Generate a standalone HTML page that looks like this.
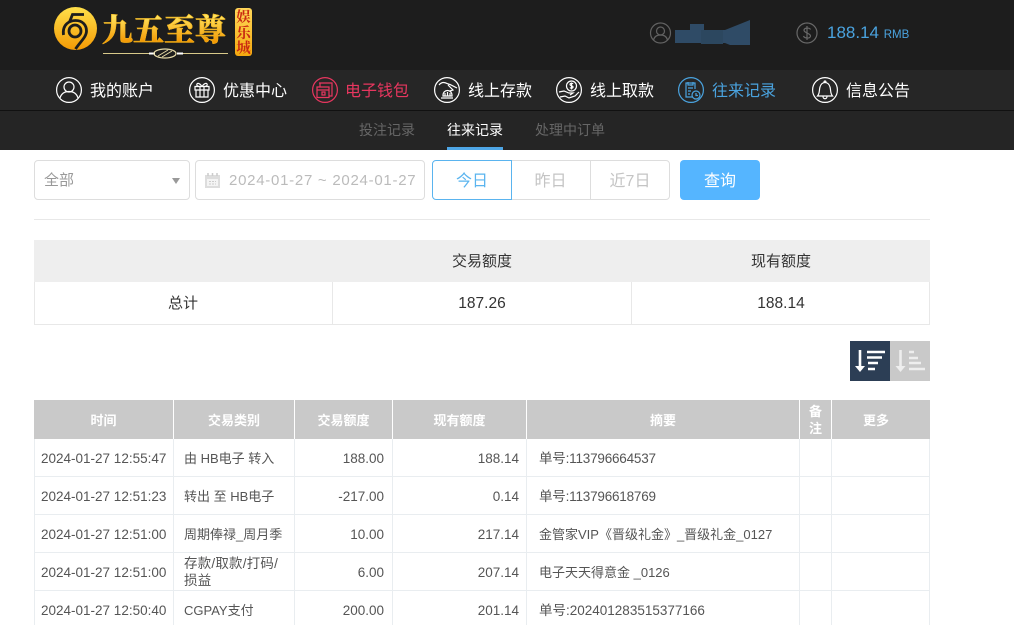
<!DOCTYPE html>
<html lang="zh">
<head>
<meta charset="utf-8">
<title>往来记录</title>
<style>
html,body{margin:0;padding:0;background:#fff;}
body{width:1014px;height:625px;overflow:hidden;position:relative;font-family:"Liberation Sans","Noto Sans CJK SC",sans-serif;font-size:14px;color:#555;}
.a{position:absolute;white-space:nowrap;}
svg{position:absolute;overflow:visible;}
.nav{font-size:16px;line-height:20px;top:82px;color:#fff;}
.ic{fill:none;stroke:#fff;stroke-width:1.2;}
.sub{font-size:14px;line-height:20px;top:120px;color:#666;}
.b{position:absolute;box-sizing:border-box;}
.th{position:absolute;top:400px;height:39px;background:#c9c9c9;color:#fff;font-weight:bold;font-size:13px;line-height:41px;text-align:center;border-right:1px solid #fff;box-sizing:border-box;}
.td{position:absolute;font-size:13.5px;line-height:18px;color:#555;white-space:nowrap;}
.c{font-size:13px;}
.n{letter-spacing:-.2px;}
.r{text-align:right;}
.hl{position:absolute;left:34px;width:896px;height:1px;background:#e9edf0;}
.vl{position:absolute;top:439px;height:186px;width:1px;background:#e9edf0;}
</style>
</head>
<body>
<div class="b" style="left:0;top:0;width:1014px;height:70px;background:#1d1d1d"></div>
<div class="b" style="left:0;top:70px;width:1014px;height:40px;background:#262626"></div>
<div class="b" style="left:0;top:110px;width:1014px;height:1px;background:#111"></div>
<div class="b" style="left:0;top:111px;width:1014px;height:39px;background:#252525"></div>

<!-- logo -->
<svg style="left:54px;top:7px" width="44" height="44" viewBox="0 0 44 44">
<defs><linearGradient id="g" x1="0" y1="0" x2="0" y2="1"><stop offset="0" stop-color="#ffe04a"/><stop offset="1" stop-color="#f49a05"/></linearGradient></defs>
<circle cx="21.5" cy="21.5" r="21.5" fill="url(#g)"/>
<path d="M30 7.500H18.500L15.500 15" fill="none" stroke="#1d1d1d" stroke-width="2.800"/>
<path d="M9.500 28C8 17 16 13.500 21.500 13.500C29 13.500 32.500 18.500 32.500 24C32.500 30 26 35 21.500 42" fill="none" stroke="#1d1d1d" stroke-width="2.800"/>
<circle cx="21" cy="24" r="6" fill="none" stroke="#1d1d1d" stroke-width="2.800"/>
</svg>
<div class="a" style="left:102px;top:9px;font:900 31px/38px 'Noto Serif CJK SC','Liberation Serif',serif;background:linear-gradient(#ffe25c 20%,#f39a06 85%);-webkit-background-clip:text;background-clip:text;color:transparent;-webkit-text-stroke:.5px #eeb01c">九五至尊</div>
<svg style="left:103px;top:46px" width="126" height="14" viewBox="0 0 126 14">
<path d="M0 7.500H46M80 7.500H125" stroke="#d8c98a" stroke-width="1"/>
<path d="M46 7.500h6M74 7.500h6" stroke="#fff" stroke-width="2"/>
<ellipse cx="62" cy="7.500" rx="11" ry="4.500" fill="none" stroke="#e8dca8" stroke-width="1.200"/>
<path d="M55 10L65 4M59 11L69 5" stroke="#e8dca8"/>
</svg>
<div class="b" style="left:235px;top:8px;width:17px;height:48px;border-radius:3px;background:linear-gradient(#ffd85a,#f4a90f)"></div>
<div class="a" style="left:236px;top:9px;width:15px;font:bold 14.500px/15.500px 'Noto Serif CJK SC',serif;color:#c92a12;white-space:normal;text-align:center">娱乐城</div>

<!-- user -->
<svg style="left:650px;top:22px" width="22" height="22" viewBox="0 0 22 22" fill="none" stroke="#626262" stroke-width="1.200">
<circle cx="10.500" cy="11" r="10"/><circle cx="10.500" cy="9" r="4"/><path d="M3.500 18c1-4 4-5 7-5s6 1 7 5"/>
</svg>
<svg style="left:675px;top:19px" width="76" height="27" viewBox="0 0 76 27">
<path d="M0 11H15V5H29V11H50L75 1V26H55L50 24H0Z" fill="#2f4b66"/>
<path d="M26 11H48V25H26Z" fill="#2c475f"/>
</svg>
<svg style="left:796px;top:22px" width="22" height="22" viewBox="0 0 22 22" fill="none" stroke="#686868" stroke-width="1.200">
<circle cx="11" cy="11" r="10"/><path d="M14.500 7.500c-1-2-6.500-2-6.500 .8S14.500 11 14.500 14s-6 2.500-7 0M11 4V18"/>
</svg>
<div class="a" style="left:827px;top:22px;font-size:17px;line-height:22px;color:#4aa3df">188.14 <span style="font-size:11.500px">RMB</span></div>

<!-- nav -->
<svg class="ic" style="left:56px;top:77px" width="26" height="26" viewBox="0 0 26 26"><circle cx="13" cy="13" r="12.400"/><circle cx="13" cy="10" r="5"/><path d="M4 21c1.500-5 5-6.500 9-6.500s7.500 1.500 9 6.500"/></svg>
<div class="a nav" style="left:90px">我的账户</div>
<svg class="ic" style="left:189px;top:77px" width="26" height="26" viewBox="0 0 26 26"><circle cx="13" cy="13" r="12.400"/><path d="M6 9.500H20V13H6ZM7 13V20H19V13M11 9.500V20M15 9.500V20M13 9.500C10 5 7 6 8 8.500 9 9.500 11 9.500 13 9.500C16 5 19 6 18 8.500 17 9.500 15 9.500 13 9.500"/></svg>
<div class="a nav" style="left:223px">优惠中心</div>
<svg class="ic" style="left:312px;top:77px;stroke:#e8365f" width="26" height="26" viewBox="0 0 26 26"><circle cx="13" cy="13" r="12.400"/><path d="M7 6H20V19H17M5 10H17V20.500H5ZM8 6V10M5 13H17M10 15h3v3h-3z"/></svg>
<div class="a nav" style="left:345px;color:#e8365f">电子钱包</div>
<svg class="ic" style="left:434px;top:77px" width="26" height="26" viewBox="0 0 26 26"><circle cx="13" cy="13" r="12.400"/><path d="M5 8C9 3 13 7 16 7.500L23 11M14 8l5 5-3 1M9 19v-1a4.500 4.500 0 0 1 9 0v1ZM11 16v3M13.500 15v4M16 16v3M7 21H19"/></svg>
<div class="a nav" style="left:468px">线上存款</div>
<svg class="ic" style="left:556px;top:77px" width="26" height="26" viewBox="0 0 26 26"><circle cx="13" cy="13" r="12.400"/><circle cx="15.500" cy="9" r="5"/><path d="M17 7c-.500-1-3-1-3 .500s3 1 3 2.500-2.500 1.500-3 .500M15.500 5.500v7M3 15l5-1 5 2h4l-3 2M4 20l5-1 4 2 6-2 4-4"/></svg>
<div class="a nav" style="left:590px">线上取款</div>
<svg class="ic" style="left:678px;top:77px;stroke:#4aa3df" width="26" height="26" viewBox="0 0 26 26"><circle cx="13" cy="13" r="12.400"/><path d="M15 20H8V6H17V12M10 5V8H15V5M10 11H15M10 14H13M10 17H12"/><circle cx="18" cy="18" r="4"/><path d="M18 16v2.500h2"/></svg>
<div class="a nav" style="left:712px;color:#4aa3df">往来记录</div>
<svg class="ic" style="left:812px;top:77px" width="26" height="26" viewBox="0 0 26 26"><circle cx="13" cy="13" r="12.400"/><path d="M5.500 19C8 16 7 13 8 10c.800-3 3-4.500 5-4.500S17.200 7 18 10c1 3 0 6 2.500 9ZM11 19.500c0 3 4 3 4 0M12 5.500c0-2 2-2 2 0"/></svg>
<div class="a nav" style="left:846px">信息公告</div>

<!-- sub nav -->
<div class="a sub" style="left:359px">投注记录</div>
<div class="a sub" style="left:447px;color:#fff">往来记录</div>
<div class="a sub" style="left:535px">处理中订单</div>
<div class="b" style="left:447px;top:147px;width:56px;height:3px;background:#4ea6e6"></div>

<!-- filters -->
<div class="b" style="left:34px;top:160px;width:156px;height:40px;border:1px solid #ddd;border-radius:4px"></div>
<div class="a" style="left:44px;top:171px;font-size:15px;line-height:20px;color:#999">全部</div>
<svg style="left:172px;top:178px" width="8" height="6"><path d="M0 0H8L4 6Z" fill="#999"/></svg>
<div class="b" style="left:195px;top:160px;width:230px;height:40px;border:1px solid #ddd;border-radius:4px"></div>
<svg style="left:204px;top:172px" width="17" height="17" viewBox="0 0 17 17"><path d="M1 3H16V16H1Z" fill="#ddd"/><path d="M3 7H14V14H3Z" fill="#f4f4f4"/><path d="M4 1V4M8.500 1V4M13 1V4" stroke="#ccc" stroke-width="1.500"/><path d="M5 9.500H12M5 12H12" stroke="#ccc" stroke-dasharray="2 1"/></svg>
<div class="a" style="left:229px;top:171px;font-size:15px;line-height:20px;color:#bbb;letter-spacing:.73px">2024-01-27 ~ 2024-01-27</div>
<div class="b" style="left:511px;top:160px;width:159px;height:40px;border:1px solid #ddd;border-radius:0 4px 4px 0"></div>
<div class="b" style="left:590px;top:160px;width:1px;height:40px;background:#ddd"></div>
<div class="b" style="left:432px;top:160px;width:80px;height:40px;border:1px solid #5ab4ef;border-radius:4px 0 0 4px;background:#fff"></div>
<div class="a" style="left:432px;top:172px;width:80px;text-align:center;font-size:16px;line-height:20px;color:#5ab4ef">今日</div>
<div class="a" style="left:511px;top:172px;width:79px;text-align:center;font-size:16px;line-height:20px;color:#c4c4c4">昨日</div>
<div class="a" style="left:590px;top:172px;width:80px;text-align:center;font-size:16px;line-height:20px;color:#c4c4c4">近7日</div>
<div class="b" style="left:680px;top:160px;width:80px;height:40px;background:#55b5ff;border-radius:4px"></div>
<div class="a" style="left:680px;top:172px;width:80px;text-align:center;font-size:16px;line-height:20px;color:#fff">查询</div>
<div class="b" style="left:34px;top:219px;width:896px;height:1px;background:#e8e8e8"></div>

<!-- summary -->
<div class="b" style="left:34px;top:240px;width:896px;height:42px;background:#eee"></div>
<div class="b" style="left:34px;top:282px;width:896px;height:43px;border:1px solid #e8e8e8;border-top:0"></div>
<div class="b" style="left:332px;top:282px;width:1px;height:43px;background:#e8e8e8"></div>
<div class="b" style="left:631px;top:282px;width:1px;height:43px;background:#e8e8e8"></div>
<div class="a" style="left:333px;top:252px;width:298px;text-align:center;color:#333;line-height:20px;font-size:15px">交易额度</div>
<div class="a" style="left:632px;top:252px;width:298px;text-align:center;color:#333;line-height:20px;font-size:15px">现有额度</div>
<div class="a" style="left:34px;top:294px;width:298px;text-align:center;color:#333;line-height:20px;font-size:15px">总计</div>
<div class="a" style="left:333px;top:294px;width:298px;text-align:center;color:#333;line-height:20px;font-size:15.500px">187.26</div>
<div class="a" style="left:632px;top:294px;width:298px;text-align:center;color:#333;line-height:20px;font-size:15.500px">188.14</div>

<!-- sort buttons -->
<div class="b" style="left:850px;top:341px;width:40px;height:40px;background:#2c3e55"></div>
<div class="b" style="left:890px;top:341px;width:40px;height:40px;background:#c9c9c9"></div>
<svg style="left:850px;top:341px" width="80" height="40" viewBox="0 0 80 40">
<path d="M10 9V26" stroke="#fff" stroke-width="2.600"/><path d="M5 25H15L10 31Z" fill="#fff"/>
<path d="M17 11H35M17 16.500H32M18 22H28M18 28H25" stroke="#fff" stroke-width="2.600" fill="none"/>
<path d="M50.500 9V26" stroke="#eee" stroke-width="2.600"/><path d="M45.500 25H55.500L50.500 31Z" fill="#eee"/>
<path d="M59 11H64M59 17H68M59 22H71M59 28H75" stroke="#eee" stroke-width="2.600" fill="none"/>
</svg>

<!-- table header -->
<div class="th" style="left:34px;width:140px">时间</div>
<div class="th" style="left:174px;width:121px">交易类别</div>
<div class="th" style="left:295px;width:98px">交易额度</div>
<div class="th" style="left:393px;width:134px">现有额度</div>
<div class="th" style="left:527px;width:273px">摘要</div>
<div class="th" style="left:800px;width:32px;line-height:17px;padding-top:3px">备<br>注</div>
<div class="b" style="left:832px;top:400px;width:98px;height:39px;background:#c9c9c9"></div>
<div class="th" style="left:832px;width:88px;border-right:0">更多</div>

<!-- table lines -->
<div class="hl" style="top:476px"></div>
<div class="hl" style="top:514px"></div>
<div class="hl" style="top:552px"></div>
<div class="hl" style="top:590px"></div>
<div class="vl" style="left:34px"></div>
<div class="vl" style="left:173px"></div>
<div class="vl" style="left:294px"></div>
<div class="vl" style="left:392px"></div>
<div class="vl" style="left:526px"></div>
<div class="vl" style="left:799px"></div>
<div class="vl" style="left:831px"></div>
<div class="vl" style="left:929px"></div>

<!-- rows -->
<div class="td" style="left:41px;top:450px">2024-01-27 12:55:47</div>
<div class="td c" style="left:184px;top:450px">由 HB电子 转入</div>
<div class="td r" style="left:295px;width:89px;top:450px">188.00</div>
<div class="td r" style="left:393px;width:126px;top:450px">188.14</div>
<div class="td n" style="left:539px;top:450px">单号:113796664537</div>

<div class="td" style="left:41px;top:488px">2024-01-27 12:51:23</div>
<div class="td c" style="left:184px;top:488px">转出 至 HB电子</div>
<div class="td r" style="left:295px;width:89px;top:488px">-217.00</div>
<div class="td r" style="left:393px;width:126px;top:488px">0.14</div>
<div class="td n" style="left:539px;top:488px">单号:113796618769</div>

<div class="td" style="left:41px;top:526px">2024-01-27 12:51:00</div>
<div class="td c" style="left:184px;top:526px">周期俸禄_周月季</div>
<div class="td r" style="left:295px;width:89px;top:526px">10.00</div>
<div class="td r" style="left:393px;width:126px;top:526px">217.14</div>
<div class="td c" style="left:539px;top:526px">金管家VIP《晋级礼金》_晋级礼金_0127</div>

<div class="td" style="left:41px;top:564px">2024-01-27 12:51:00</div>
<div class="td" style="left:184px;top:555px;line-height:17px;letter-spacing:.2px">存款/取款/打码/<br>损益</div>
<div class="td r" style="left:295px;width:89px;top:564px">6.00</div>
<div class="td r" style="left:393px;width:126px;top:564px">207.14</div>
<div class="td c" style="left:539px;top:564px">电子天天得意金 _0126</div>

<div class="td" style="left:41px;top:602px">2024-01-27 12:50:40</div>
<div class="td c" style="left:184px;top:602px">CGPAY支付</div>
<div class="td r" style="left:295px;width:89px;top:602px">200.00</div>
<div class="td r" style="left:393px;width:126px;top:602px">201.14</div>
<div class="td" style="left:539px;top:602px">单号:202401283515377166</div>
</body>
</html>
